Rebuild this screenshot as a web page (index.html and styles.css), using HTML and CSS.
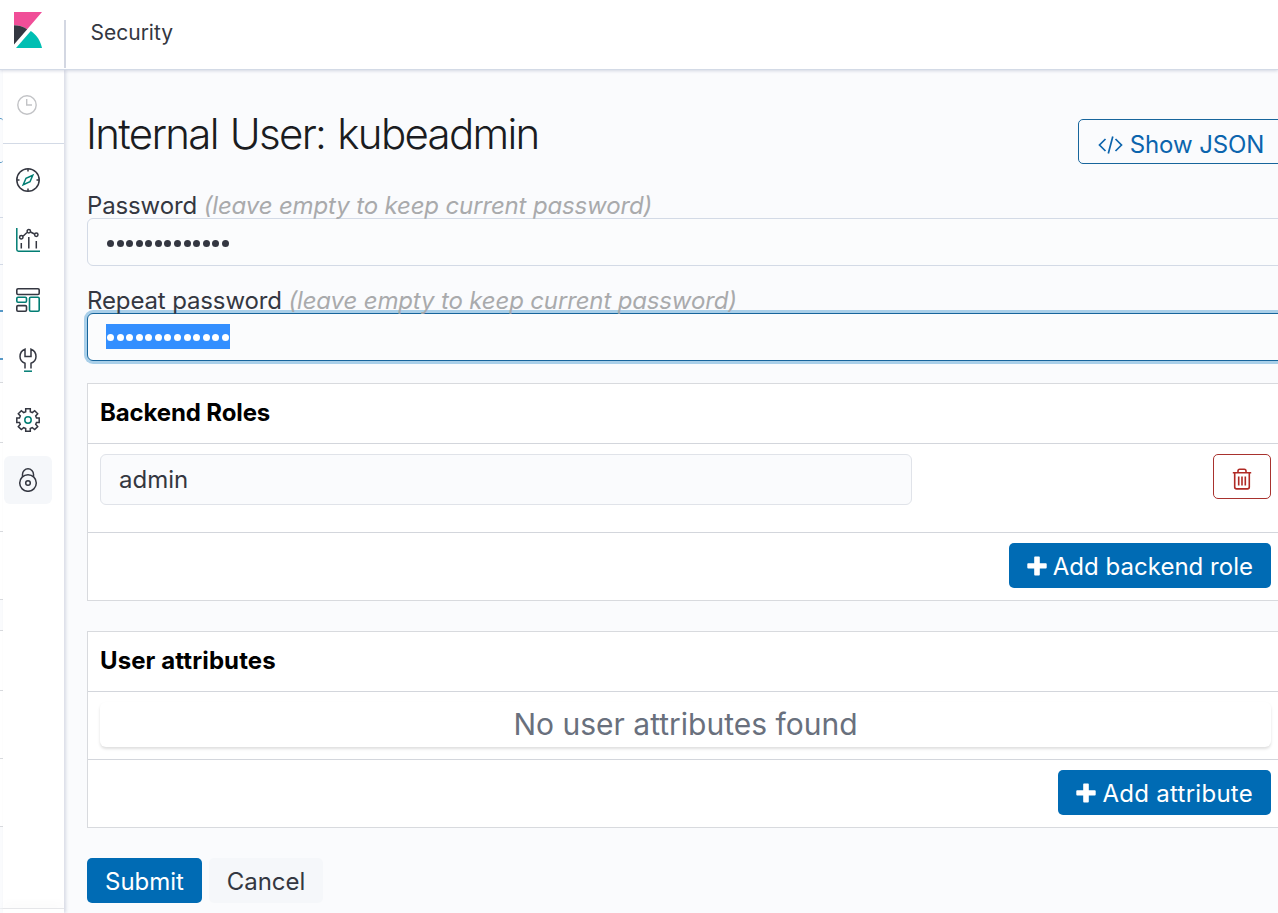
FILE: index.html
```
<!DOCTYPE html>
<html lang="en">
<head>
<meta charset="utf-8">
<title>Security</title>
<link rel="stylesheet" href="styles.css">
</head>
<body>
<header class="topbar">
  <a class="logo" aria-label="Home">
    <svg width="28" height="36" viewBox="0 0 28 36"><path fill="#f04e98" d="M0 0h28L13.200 17.200C9.400 14.600 5 13.300 0 13.300z"/><path fill="#343741" d="M0 13.300c5 0 9.400 1.300 13.200 3.900L0 32.500z"/><path fill="#00bfb3" d="M16.800 19C22.500 22.700 26.300 28.500 28 36H2z"/></svg>
  </a>
  <div class="crumb">Security</div>
</header>
<div class="shell">
  <div class="sliver">
    <i class="s-button"></i><i class="s-input"></i><i class="s-focus"></i>
    <i class="s-panel"><b class="h60"></b><b class="h89"></b><b class="h68"></b></i>
    <i class="s-panel"><b class="h60"></b><b class="h68"></b><b class="h68"></b></i>
    <i class="s-bottom"></i>
  </div>
  <nav class="rail">
    <div class="recent"><svg width="20" height="20" viewBox="0 0 20 20" fill="none" stroke="#c2c3c6" stroke-width="1.400"><circle cx="10" cy="10" r="9.200"/><path d="M9.700 4v6H15"/></svg></div>
    <a class="item"><svg width="24" height="24" viewBox="0 0 24 24" fill="none" stroke="#343741" stroke-width="1.500"><circle cx="12" cy="12" r="11.200"/><path d="M12 1v2.500M12 20.500V23M1 12h2.500M20.500 12H23"/><path stroke="#017d73" d="M16.800 7.200L14 13.800l-6.800 3L10 10.200z"/></svg></a>
    <a class="item"><svg width="24" height="24" viewBox="0 0 24 24" fill="none" stroke="#343741" stroke-width="1.500"><path stroke="#017d73" d="M.8 0v21.500q0 1.700 1.700 1.700H24"/><path d="M5.300 15v5.500M12.800 9v11.500M20.300 13v7.500M7 8.200l4-3.700M14.500 4l4 2"/><circle cx="5.300" cy="9.300" r="1.700"/><circle cx="12.800" cy="3.300" r="1.700"/><circle cx="20.300" cy="6.700" r="1.700"/></svg></a>
    <a class="item"><svg width="24" height="24" viewBox="0 0 24 24" fill="none" stroke="#343741" stroke-width="1.600"><rect x=".8" y=".8" width="22.400" height="5.700" rx="1.200"/><rect stroke="#017d73" x=".8" y="9.300" width="9.700" height="5" rx="1.200"/><rect x=".8" y="17.600" width="9.700" height="5.600" rx="1.200"/><rect stroke="#017d73" x="13.500" y="9.300" width="9.700" height="13.900" rx="1.200"/></svg></a>
    <a class="item"><svg width="24" height="24" viewBox="0 0 24 24" fill="none" stroke="#343741" stroke-width="1.500"><path d="M9 20.500v-5.300C5.800 14 4 11.500 4 8.500 4 5.300 6 2.400 9 1.200v7.200h6V1.200c3 1.200 5 4.100 5 7.300 0 3-1.800 5.500-5 6.700v5.300"/><path stroke="#017d73" d="M8 23.200h8"/></svg></a>
    <a class="item"><svg width="24" height="24" viewBox="0 0 24 24" fill="none" stroke="#343741" stroke-width="1.500"><path d="M9.700.8h4.600v3l2 .9 2.400-2 3 3-2 2.300.8 1.900h2.700v4.500h-2.700l-.8 1.900 2 2.300-3 3-2.400-2-2 .9v2.700H9.700v-2.700l-2-.9-2.400 2-3-3 2-2.300-.8-1.900H.8V9.900h2.700l.8-1.900-2-2.300 3-3 2.400 2 2-.9z"/><circle stroke="#017d73" cx="12" cy="12" r="3.200"/></svg></a>
    <a class="item active"><svg width="24" height="24" viewBox="0 0 24 24" fill="none" stroke="#343741" stroke-width="1.500"><circle cx="12" cy="15" r="8.300"/><circle cx="12" cy="15" r="2.300"/><path d="M6.500 8.500V6.300a5.500 5.500 0 0 1 11 0v2.200"/></svg></a>
    <div class="rail-foot"></div>
  </nav>
  <main class="page">
    <div class="content">
      <div class="heading">
        <h1>Internal User: kubeadmin</h1>
        <button class="btn outline"><svg width="25" height="20" viewBox="0 0 25 20" fill="none" stroke="#0b64ad" stroke-width="1.700"><path d="M7.500 4L1.500 10l6 6M17.500 4l6 6-6 6M14.800 1.500l-4.500 17"/></svg><span>Show JSON</span></button>
      </div>
      <label class="label">Password <em>(leave empty to keep current password)</em></label>
      <div class="field"><span class="dots"><i></i><i></i><i></i><i></i><i></i><i></i><i></i><i></i><i></i><i></i><i></i><i></i><i></i></span></div>
      <label class="label second">Repeat password <em>(leave empty to keep current password)</em></label>
      <div class="field focus"><span class="dots"><i></i><i></i><i></i><i></i><i></i><i></i><i></i><i></i><i></i><i></i><i></i><i></i><i></i></span></div>
      <section class="panel">
        <h2>Backend Roles</h2>
        <div class="row roles">
          <div class="role">admin</div>
          <button class="btn trash" aria-label="Delete"><svg width="20" height="22" viewBox="0 0 20 22" fill="none" stroke="#b02a25" stroke-width="1.600"><path d="M.8 4.800h18.400M6 4.500V3q0-1.700 1.700-1.700h4.600Q14 1.300 14 3v1.500M2.700 5v14q0 1.900 1.900 1.900h10.800q1.900 0 1.900-1.900V5M6.700 8.500v9M10 8.500v9M13.300 8.500v9"/></svg></button>
        </div>
        <div class="row foot"><button class="btn primary"><svg width="20" height="20" viewBox="0 0 20 20" fill="#fff"><path d="M8 .5h4q.8 0 .8.800v5.900h6q.9 0 .9.900v3.500q0 .9-.9.900h-6v6q0 .9-.8.900H8q-.8 0-.8-.9v-6h-6q-.9 0-.9-.9V8.100q0-.9.900-.9h6V1.300Q7.200.5 8 .5z"/></svg><span class="add-role">Add backend role</span></button></div>
      </section>
      <section class="panel">
        <h2 class="attrs-title">User attributes</h2>
        <div class="row attrs"><div class="empty">No user attributes found</div></div>
        <div class="row foot"><button class="btn primary"><svg width="20" height="20" viewBox="0 0 20 20" fill="#fff"><path d="M8 .5h4q.8 0 .8.800v5.900h6q.9 0 .9.900v3.500q0 .9-.9.900h-6v6q0 .9-.8.900H8q-.8 0-.8-.9v-6h-6q-.9 0-.9-.9V8.100q0-.9.900-.9h6V1.300Q7.200.5 8 .5z"/></svg><span class="add-attr">Add attribute</span></button></div>
      </section>
      <div class="actions"><button class="btn primary submit">Submit</button><button class="btn muted">Cancel</button></div>
    </div>
  </main>
</div>
</body>
</html>
```
FILE: styles.css
```
* { box-sizing: border-box; }
body { margin: 0; width: 1278px; height: 913px; overflow: hidden; background: #fafbfd; color: #343741; font-family: Inter, "Liberation Sans", sans-serif; font-size: 24px; font-weight: 400; }
svg { display: block; flex: none; }
.topbar { position: relative; z-index: 2; display: flex; height: 70px; background: #fff; border-bottom: 1px solid #d3dae6; box-shadow: 0 1px 3px rgba(100, 110, 150, .25); }
.logo { width: 64px; padding: 12px 0 0 14px; }
.crumb { height: 48px; margin-top: 20px; padding-left: 24.500px; border-left: 2px solid #d3d7e2; font-size: 21px; line-height: 26px; }
.shell { display: flex; height: 843px; }
.sliver { width: 3px; flex: none; overflow: hidden; display: flex; flex-direction: column; }
.sliver i, .sliver b { display: block; flex: none; width: 3px; }
.s-button { height: 45px; margin-top: 48px; border: solid #4f93c2; border-width: 1px 0; border-radius: 0 4px 4px 0; }
.s-input { height: 48px; margin-top: 54px; border: solid #d3dae6; border-width: 1px 0; }
.s-focus { height: 50px; margin-top: 45px; border: solid #5698c7; border-width: 2px 0; }
.s-panel { margin-top: 22px; background: #fff; border-top: 1px solid #d8dade; }
.s-panel + .s-panel { margin-top: 30px; }
.sliver b { border-bottom: 1px solid #d8dade; }
.h60 { height: 60px; }
.h68 { height: 68px; }
.h89 { height: 89px; }
.s-bottom { height: 82px; border-bottom: 1px solid #eceef1; }
.rail { position: relative; z-index: 1; width: 61px; flex: none; display: flex; flex-direction: column; background: #fff; box-shadow: 2px 0 3px rgba(100, 110, 150, .22); }
.recent { height: 74px; padding: 25px 0 0 14px; border-bottom: 1px solid #d3dae6; }
.item { display: flex; align-items: center; justify-content: center; width: 48px; height: 48px; margin: 0 0 12px 1px; border-radius: 6px; flex: none; }
.recent + .item { margin-top: 12px; }
.item.active { background: #f5f7fa; }
.rail-foot { margin-top: auto; height: 5px; border-top: 1px solid #e5e6e9; box-shadow: 0 -4px 10px rgba(0, 0, 0, .03); }
.page { flex: 1; min-width: 0; overflow: hidden; padding-left: 23px; }
.content { width: 1197px; }
.heading { display: flex; justify-content: space-between; height: 123px; padding-top: 49px; }
h1 { margin: -8px 0 0 -1px; font-size: 42px; line-height: 46px; font-weight: 300; letter-spacing: -1.700px; word-spacing: 2px; color: #1a1c21; white-space: nowrap; }
.btn { display: flex; align-items: center; justify-content: center; height: 45px; padding: 0 17px; border: 1px solid transparent; border-radius: 5px; font: 400 24px/42px Inter, "Liberation Sans", sans-serif; white-space: nowrap; flex: none; background: #fff; gap: 6px; }
.btn.primary, .btn.muted { padding-top: 3px; }
.btn.primary svg { margin-top: -2px; }
.btn.outline { width: 206px; padding-top: 6px; gap: 7px; border-color: #17659c; color: #0b64ad; background: #fafbfd; letter-spacing: -.1px; }
.primary { background: #006bb4; color: #fff; }
.submit { width: 115px; }
.muted { width: 114px; background: #f5f7fa; color: #343741; }
.label { display: block; position: relative; height: 25px; line-height: 25px; white-space: nowrap; letter-spacing: -.13px; }
.label em { color: #a9aaac; letter-spacing: -.15px; }
.second { margin-top: 22px; }
.field { height: 48px; display: flex; align-items: center; padding-left: 18px; border: 1px solid #d3dae6; border-radius: 6px; background: #fbfcfd; }
.focus { padding-bottom: 2px; border-color: #17659c; box-shadow: 0 0 0 3px #a9cfe9; }
.dots { display: flex; align-items: center; height: 25px; width: 124px; padding: 2px 1px 0; justify-content: space-between; }
.dots i { width: 7px; height: 7px; border-radius: 50%; background: #343741; }
.focus .dots { background: #338fff; }
.focus .dots i { background: #fff; }
.panel { margin-top: 22px; background: #fff; border: 1px solid #d8dade; }
.panel + .panel { margin-top: 30px; }
h2 { height: 59px; margin: 0; padding-left: 12px; font-size: 24px; line-height: 57px; font-weight: 700; letter-spacing: -.13px; color: #000; }
.attrs-title { letter-spacing: .1px; }
.row { display: flex; border-top: 1px solid #d3d6dc; padding: 10px 12px; }
.roles { height: 89px; justify-content: space-between; }
.role { width: 812px; height: 51px; padding-left: 18px; border: 1px solid #e0e3e9; border-radius: 6px; background: #fafbfd; line-height: 50px; }
.btn.trash { width: 58px; padding: 5px 0 0; border-color: #a8322e; }
.foot { height: 68px; justify-content: flex-end; }
.add-role { letter-spacing: .02px; }
.add-attr { letter-spacing: .27px; }
.attrs { height: 68px; padding-bottom: 12px; }
.empty { flex: 1; border-radius: 6px; background: #fff; box-shadow: 0 2px 3px rgba(0, 0, 0, .13); text-align: center; font-size: 30px; line-height: 45px; color: #69707d; }
.actions { display: flex; gap: 7px; margin-top: 30px; }
```
